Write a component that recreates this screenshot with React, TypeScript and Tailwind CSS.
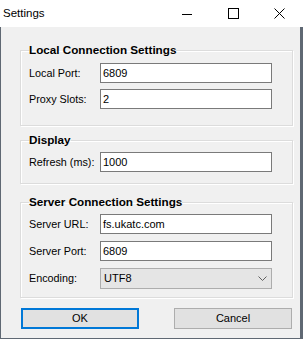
import React from "react";

const font = { fontFamily: '"Liberation Sans", Arial, sans-serif' };

function Field({ label, value }: { label: string; value: string }) {
    return (
        <div className="flex items-center">
            <span className="w-[71px] text-[10.8px] text-black">{label}</span>
            <div className="h-[20px] w-[172px] border border-[#7a7a7a] bg-white pl-[2px] text-[11px] leading-[18px] text-black">
                {value}
            </div>
        </div>
    );
}

function Combo({ label, value }: { label: string; value: string }) {
    return (
        <div className="flex items-center">
            <span className="w-[71px] text-[10.8px] text-black">{label}</span>
            <div className="flex h-[21px] w-[172px] items-center justify-between border border-[#adadad] bg-[#e5e5e5] pl-[3px] pr-[4px] text-[11px] text-black">
                <span>{value}</span>
                <svg width="9" height="5" viewBox="0 0 9 5">
                    <path d="M0.5 0.5 L4.5 4.5 L8.5 0.5" fill="none" stroke="#606060" strokeWidth="1" />
                </svg>
            </div>
        </div>
    );
}

function Group({
    title,
    className,
    children,
}: {
    title: string;
    className: string;
    children: React.ReactNode;
}) {
    return (
        <fieldset className={`ml-[19px] w-[273px] border border-[#dcdcdc] pl-[8px] shadow-[1px_1px_0_#ffffff,inset_1px_1px_0_#ffffff] ${className}`}>
            <legend className="px-0 text-[11.7px] font-bold leading-[14px] text-black">{title}</legend>
            {children}
        </fieldset>
    );
}

export default function App() {
    return (
        <div className="flex h-[339px] w-[303px] flex-col bg-[#f0f0f0]" style={font}>
            {/* title bar */}
            <div className="flex h-[27px] items-center justify-between bg-white pr-[1px]">
                <span className="pl-[3px] text-[11.5px] text-black">Settings</span>
                <div className="flex h-full">
                    <div className="flex w-[46px] items-center justify-center">
                        <svg width="10" height="10" viewBox="0 0 10 10">
                            <path d="M0 5.5 H10" stroke="#000" strokeWidth="1" />
                        </svg>
                    </div>
                    <div className="flex w-[46px] items-center justify-center">
                        <svg width="11" height="11" viewBox="0 0 11 11">
                            <rect x="0.5" y="0.5" width="10" height="10" fill="none" stroke="#000" strokeWidth="1" />
                        </svg>
                    </div>
                    <div className="flex w-[46px] items-center justify-center">
                        <svg width="11" height="11" viewBox="0 0 11 11">
                            <path d="M0.5 0.5 L10.5 10.5 M10.5 0.5 L0.5 10.5" stroke="#000" strokeWidth="1" />
                        </svg>
                    </div>
                </div>
            </div>

            {/* body */}
            <div className="flex flex-1 flex-col border-b border-l border-r-[3px] border-[#5f6873]">
                <Group title="Local Connection Settings" className="mt-[16px] pb-[16px]">
                    <div className="flex flex-col gap-[6px] pt-[6px]">
                        <Field label="Local Port:" value="6809" />
                        <Field label="Proxy Slots:" value="2" />
                    </div>
                </Group>

                <Group title="Display" className="mt-[7px] pb-[11px]">
                    <div className="pt-[5px]">
                        <Field label="Refresh (ms):" value="1000" />
                    </div>
                </Group>

                <Group title="Server Connection Settings" className="mt-[11px] pb-[8px]">
                    <div className="flex flex-col gap-[7px] pt-[5px]">
                        <Field label="Server URL:" value="fs.ukatc.com" />
                        <Field label="Server Port:" value="6809" />
                        <Combo label="Encoding:" value="UTF8" />
                    </div>
                </Group>

                <div className="ml-[20px] mt-[10px] flex gap-[35px]">
                    <button className="h-[21px] w-[118px] border-2 border-[#0078d7] bg-[#e1e1e1] text-[11px] text-black">
                        OK
                    </button>
                    <button className="h-[21px] w-[118px] border border-[#adadad] bg-[#e1e1e1] text-[11px] text-black">
                        Cancel
                    </button>
                </div>
            </div>
        </div>
    );
}
